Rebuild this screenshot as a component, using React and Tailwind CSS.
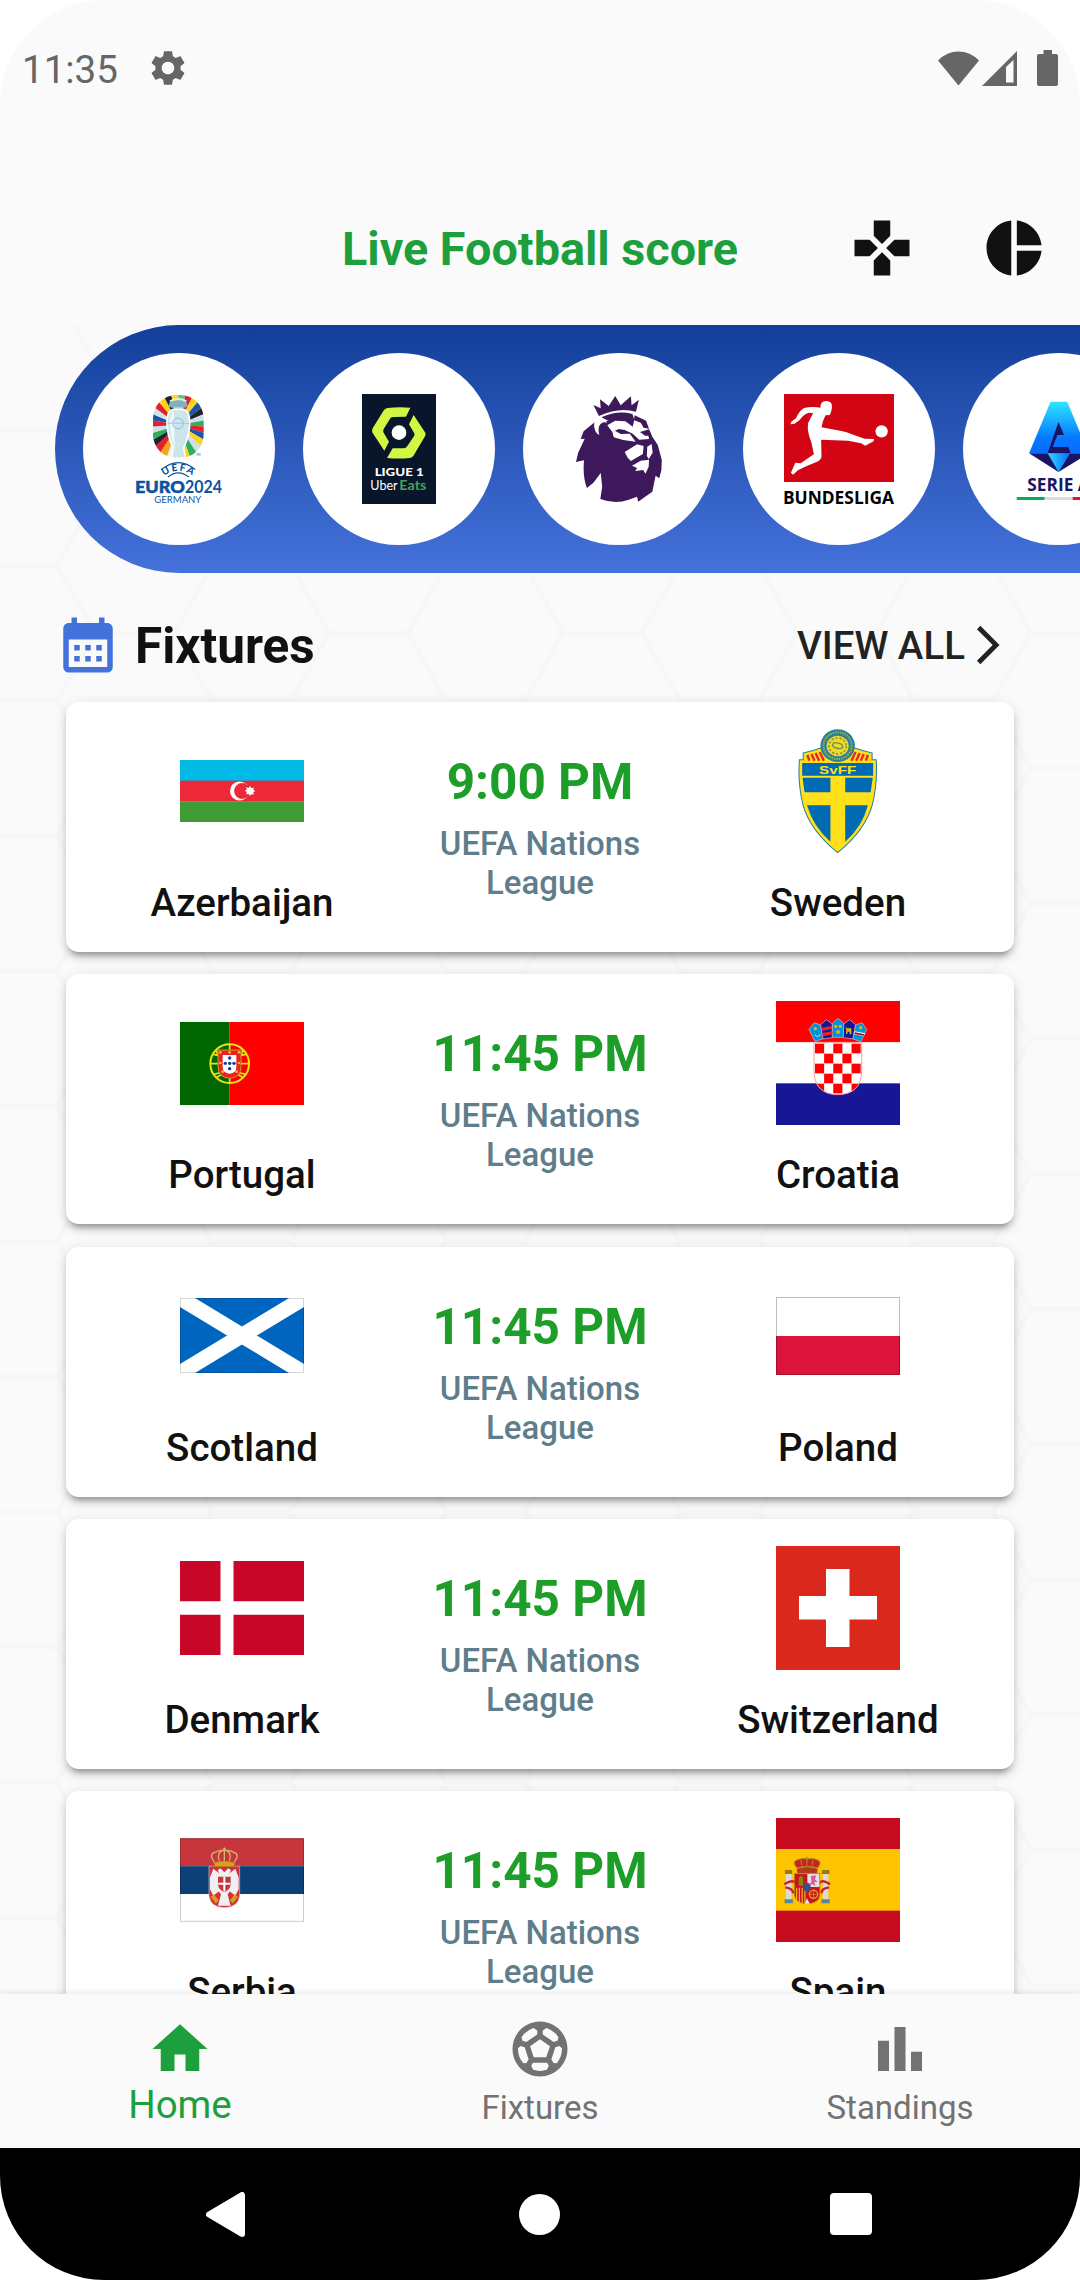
import React from "react";
import {
  MdSettings,
  MdGames,
  MdPieChart,
  MdCalendarMonth,
  MdArrowForwardIos,
  MdHome,
  MdOutlineSportsSoccer,
  MdBarChart,
} from "react-icons/md";

/* ---------- league logos (110 x 110) ---------- */

const RAY_COLORS = [
  "#66c07c", "#e3202b", "#ffd21c", "#1d55a8", "#22242d", "#cfe0e8", "#2fae5f",
  "#e3202b", "#1d55a8", "#ffd21c", "#cfe0e8", "#2fae5f", "#ffd21c", "#e8f2f4",
  "#e8f2f4", "#f4a51c", "#e3202b", "#22242d", "#2fae5f", "#cfe0e8", "#e3202b",
  "#1d55a8", "#cfe0e8", "#e3202b", "#ffd21c", "#22242d", "#ffd21c",
];

function EuroLogo() {
  const step = 360 / RAY_COLORS.length;
  return (
    <svg viewBox="0 0 110 110" className="size-[110px] overflow-visible">
      <defs>
        <clipPath id="oval">
          <rect x="339" y="255" width="152" height="189" rx="70" />
        </clipPath>
        <path id="uefaArc" d="M372 498 Q415 466 460 498" />
      </defs>
      <g transform="scale(.33333) translate(-252 -252)">
        <g clipPath="url(#oval)">
          {RAY_COLORS.map((c, i) => {
            const a = ((i * step - 90) * Math.PI) / 180;
            const b = (((i + 1) * step - 90) * Math.PI) / 180;
            const x1 = 415 + 170 * Math.cos(a);
            const y1 = 345 + 170 * Math.sin(a);
            const x2 = 415 + 170 * Math.cos(b);
            const y2 = 345 + 170 * Math.sin(b);
            return <path key={i} fill={c} d={`M415 345L${x1} ${y1}L${x2} ${y2}Z`} />;
          })}
        </g>
        <path d="M388 278 Q415 262 441 278 L443 290 Q415 300 386 290Z" fill="#7fb0bd" />
        <path d="M390 274 Q415 260 439 274" stroke="#d9eef0" strokeWidth="6" fill="none" />
        <path d="M402 290 H428 L430 312 H399Z" fill="#a5cfd8" />
        <path
          d="M394 444 L399 414 Q380 372 381 336 Q381 302 400 298 L430 298 Q449 302 449 336 Q450 372 431 414 L437 444Z"
          fill="#cbe5ea"
          stroke="#fff"
          strokeWidth="5"
        />
        <path d="M390 330 Q395 300 402 305 L404 420 Q388 370 390 330Z" fill="#eef8f9" />
        <circle cx="414" cy="340" r="16" fill="none" stroke="#8fc0cf" strokeWidth="3" />
        <path d="M383 340 H448" stroke="#8fc0cf" strokeWidth="2" />
        <path d="M364 479 Q415 437 466 479 M384 501 Q415 476 446 501" fill="none" stroke="#0d54a0" strokeWidth="3.5" />
        <text fontFamily="Lato" fontWeight="900" fontSize="30" fill="#0d54a0" letterSpacing="5">
          <textPath href="#uefaArc">UEFA</textPath>
        </text>
        <text x="285" y="549" textLength="150" lengthAdjust="spacingAndGlyphs" fontFamily="Lato" fontWeight="900" fontSize="51" fill="#0d54a0" stroke="#0d54a0" strokeWidth="1.5">EURO</text>
        <text x="435" y="549" textLength="111" lengthAdjust="spacingAndGlyphs" fontFamily="Lato" fontWeight="700" fontSize="51" fill="#0d54a0">2024</text>
        <text x="343" y="579" textLength="141" lengthAdjust="spacingAndGlyphs" fontFamily="Lato" fontSize="28" fill="#0d54a0">GERMANY</text>
        <text x="468" y="437" fontFamily="Lato" fontSize="9" fill="#0d54a0">TM</text>
      </g>
    </svg>
  );
}

function LigueLogo() {
  return (
    <svg viewBox="0 0 110 110" className="size-[110px]">
      <g transform="scale(.33333) translate(-912 -252)">
        <rect x="966" y="252" width="222" height="330" fill="#08152b" />
        <path fill="#d2f743" d="M1043 294Q1036 295 1032 300L998 355Q995 362 998 369L1033 422L1047 395L1031 368Q1028 363 1031 357L1051 325Q1055 321 1060 321L1098 320L1111 293Q1075 290 1043 294Z" />
        <path fill="#d2f743" d="M1121 315L1156 368Q1158 374 1155 379L1120 438Q1116 443 1110 444Q1075 447 1041 444L1058 415L1092 415Q1098 415 1102 408L1123 377Q1125 373 1122 368L1107 343Z" />
        <circle cx="1077" cy="368" r="22" fill="#fff" />
        <text x="1004" y="497" textLength="147" lengthAdjust="spacingAndGlyphs" fontFamily="Lato" fontWeight="900" fontSize="36" fill="#fff">LIGUE 1</text>
        <text x="991" y="541" textLength="82" lengthAdjust="spacingAndGlyphs" fontFamily="Lato" fontSize="38" fill="#fff">Uber</text>
        <text x="1078" y="541" textLength="81" lengthAdjust="spacingAndGlyphs" fontFamily="Lato" fontWeight="700" fontSize="38" fill="#45a356">Eats</text>
      </g>
    </svg>
  );
}

function PremierLogo() {
  return (
    <svg viewBox="0 0 110 110" className="size-[110px]">
      <g transform="scale(.3635 .33333) translate(-149 -252)" fill="#3d195b">
        <path d="M245 318L230 285L250 295L248 268L272 288L290 258L305 286L333 259L335 286L355 269L347 305Q300 290 245 318Z" />
        <path d="M252 322Q295 300 337 312L342 328L343 316L375 332L383 357L392 380L407 405L418 450L417 480L411 505L401 497L392 545L353 575L350 560L325 570Q290 584 249 567L254 530L250 489L230 518L212 534Q200 500 204 451L182 456L188 428L206 386L195 387L203 364L233 337Q230 365 245 374Q238 345 254 334L272 333Z" />
        <g fill="#fff">
          <path d="M268 346L290 332L318 334L338 350L342 331L360 338L368 353L385 357L358 366L372 377L381 377L383 387L356 389L338 371L316 360L300 357L289 362L305 372L330 371L346 395L312 390L286 382L282 366Z" />
          <path d="M316 426L350 403L368 408L366 432L333 453L324 443Z" />
          <path d="M378 410L390 402L393 428L382 447L377 438Z" />
          <path d="M336 467L360 452L383 449L382 470L373 491L367 480L345 483L350 474Z" />
          <path d="M232 340Q240 326 262 330L268 338Q252 332 245 350Q242 362 246 375Q232 368 232 340Z" />
        </g>
      </g>
    </svg>
  );
}

function BundesligaLogo() {
  return (
    <svg viewBox="0 0 110 110" className="size-[110px] overflow-visible">
      <g transform="scale(.3642 .33333) translate(-754 -252)">
        <rect x="754" y="252" width="302" height="264" fill="#d20515" />
        <g fill="#fff">
          <path d="M854 293Q853 274 870 273Q886 274 886 290Q885 303 880 315L868 316Q860 332 857 352L912 363Q928 366 944 374L975 386L1001 387L1000 394L977 407L966 400L930 392L856 389L857 440Q856 448 848 454L815 469L792 481L779 494L773 488L785 458L800 460L836 433L829 397Q817 365 820 340L834 310L822 308Q808 312 797 330L783 341L772 343L774 335L787 325Q795 303 809 294Q832 288 854 293Z" />
          <ellipse cx="1022" cy="364" rx="17" ry="18.5" />
        </g>
        <text x="751" y="581" textLength="305" lengthAdjust="spacingAndGlyphs" fontFamily="Open Sans" fontWeight="700" fontSize="51" fill="#000">BUNDESLIGA</text>
      </g>
    </svg>
  );
}

function SerieALogo() {
  return (
    <svg viewBox="0 0 110 110" className="size-[110px] overflow-visible">
      <defs>
        <linearGradient id="serieBlue" x1="0" y1="0" x2="0" y2="1">
          <stop offset="0" stopColor="#2fe6ff" />
          <stop offset=".7" stopColor="#0678ff" />
          <stop offset="1" stopColor="#066cff" />
        </linearGradient>
        <linearGradient id="serieGem" x1="0" y1="0" x2="1" y2="0">
          <stop offset="0" stopColor="#2fd8ff" />
          <stop offset="1" stopColor="#066cff" />
        </linearGradient>
      </defs>
      <g transform="scale(.3635 .33333) translate(-1359 -252)">
        <path d="M1487 275H1533L1592 430H1428Z" fill="url(#serieBlue)" />
        <path d="M1509 336L1524 375H1506L1493 411H1536L1542 430H1479Z" fill="#1b1464" />
        <path d="M1428 430H1592L1509 486Z" fill="#1b1464" />
        <path d="M1479 430H1541L1509 486Z" fill="url(#serieGem)" />
        <text x="1423" y="542" textLength="172" lengthAdjust="spacingAndGlyphs" fontFamily="Open Sans" fontWeight="700" fontSize="52" fill="#1b1464">SERIE A</text>
        <path d="M1394 561H1471V570H1394Z" fill="#00b14f" />
        <path d="M1471 561H1548V570H1471Z" fill="#dcdcdc" />
        <path d="M1548 561H1625V570H1548Z" fill="#ec1035" />
      </g>
    </svg>
  );
}

/* ---------- team flags (124 wide) ---------- */

function Azerbaijan() {
  return (
    <svg viewBox="0 0 124 62" className="w-[124px] h-[62px]">
      <rect width="124" height="21" fill="#00b9e4" />
      <rect y="20.7" width="124" height="21" fill="#ed2939" />
      <rect y="41.5" width="124" height="20.5" fill="#3f9c35" />
      <circle cx="59.5" cy="31" r="9.5" fill="#fff" />
      <circle cx="62" cy="31" r="7.9" fill="#ed2939" />
      <path fill="#fff" d="M70 26l1.4 2.3 2.5-.8-.7 2.3 2 1.2-2 1.3.7 2.5-2.5-.7L70 36l-1.4-2.2-2.5.7.7-2.5-2-1.3 2-1.2-.7-2.3 2.5.8z" />
    </svg>
  );
}

function Sweden() {
  return (
    <svg viewBox="0 0 124 124" className="size-[124px]">
      <g transform="scale(.3444 .33333) translate(-685 -417)">
        <path d="M753 509H764V489Q790 484 815 474H914Q940 484 964 489V509H976Q980 580 965 643Q945 720 864 788Q783 720 763 643Q748 580 753 509Z" fill="#ffe01b" stroke="#2b7f9c" strokeWidth="3" />
        <path d="M776 495L782 512M788 492L797 512M800 489L810 512M812 486L824 512M952 495L946 512M940 492L931 512M928 489L918 512M916 486L904 512" stroke="#e8262c" strokeWidth="7" />
        <path fill="#006ab3" d="M761 519H967V557H761ZM762 563H843V607H768ZM886 563H966L960 607H886ZM775 646H843V755Q793 710 775 646ZM886 646H952Q935 712 886 755Z" />
        <text x="864" y="552" textAnchor="middle" textLength="108" lengthAdjust="spacingAndGlyphs" fontFamily="Liberation Sans" fontWeight="700" fontSize="34" fill="#ffe01b">SvFF</text>
        <ellipse cx="864" cy="467" rx="50" ry="49" fill="#2b7f9c" />
        <ellipse cx="864" cy="467" rx="41" ry="40" fill="none" stroke="#9fb83c" strokeWidth="6" strokeDasharray="4 3" />
        <ellipse cx="864" cy="468" rx="32" ry="31" fill="#f0d92a" />
        <ellipse cx="864" cy="468" rx="25" ry="24" fill="none" stroke="#8c9a3a" strokeWidth="5" strokeDasharray="7 5" />
        <ellipse cx="864" cy="467" rx="15" ry="8" transform="rotate(15 864 467)" fill="none" stroke="#6f8f45" strokeWidth="4" />
      </g>
    </svg>
  );
}

function Portugal() {
  return (
    <svg viewBox="60 65 372 249" className="w-[124px] h-[83px]">
      <rect x="60" y="65" width="148" height="249" fill="#060" />
      <rect x="208" y="65" width="224" height="249" fill="#f00" />
      <g fill="none" stroke="#e6e31a" strokeWidth="6">
        <circle cx="209" cy="190" r="58" />
        <path d="M152 190H266M209 131V249M160 162Q209 176 258 162M162 222Q209 206 256 222M168 150Q185 195 250 232M250 150Q225 205 168 232" strokeWidth="5" />
      </g>
      <path d="M174 149H243V198Q243 232 209 234Q174 232 174 198Z" fill="#f0201c" stroke="#b9a13a" strokeWidth="3" />
      <path d="M188 164H229V200Q229 218 209 220Q188 218 188 200Z" fill="#fff" />
      <g fill="#0c3c9c">
        <circle cx="209" cy="173" r="5" /><circle cx="209" cy="189" r="5" /><circle cx="209" cy="205" r="5" />
        <circle cx="196" cy="189" r="5" /><circle cx="222" cy="189" r="5" />
      </g>
      <g fill="#d8c72a">
        <circle cx="181" cy="156" r="4" /><circle cx="209" cy="156" r="4" /><circle cx="237" cy="156" r="4" />
        <circle cx="181" cy="188" r="4" /><circle cx="237" cy="188" r="4" /><circle cx="188" cy="214" r="4" /><circle cx="230" cy="214" r="4" />
      </g>
    </svg>
  );
}

function Croatia() {
  const cells = [];
  for (let r = 0; r < 5; r++)
    for (let c = 0; c < 5; c++)
      if ((r + c) % 2 === 0) cells.push(<rect key={`${r}-${c}`} x={165 + c * 27.4} y={194 + r * 30} width="27.4" height="29" fill="#f00" />);
  return (
    <svg viewBox="48 66 372 372" className="size-[124px]">
      <defs>
        <clipPath id="croShield">
          <path d="M162 190H305V274Q305 346 233.500 347Q162 346 162 274Z" />
        </clipPath>
      </defs>
      <rect x="48" y="66" width="372" height="124" fill="#f00" />
      <rect x="48" y="190" width="372" height="124" fill="#fff" />
      <rect x="48" y="313" width="372" height="125" fill="#171796" />
      <g clipPath="url(#croShield)">
        <rect x="160" y="188" width="148" height="162" fill="#fff" />
        {cells}
      </g>
      <path d="M162 190H305V274Q305 346 233.500 347Q162 346 162 274Z" fill="none" stroke="#ff9a9a" strokeWidth="3" />
      <g stroke="#f2b0b8" strokeWidth="2">
        <path d="M147 151L163 131L182 138L189 179L165 188Z" fill="#0093dd" />
        <path d="M182 137L199 122L217 135V176L189 180Z" fill="#171796" />
        <path d="M217 133L234 118L251 133L250 175H217Z" fill="#0093dd" />
        <path d="M251 135L269 122L287 137L279 180L250 176Z" fill="#171796" />
        <path d="M287 138L306 131L320 151L303 188L279 180Z" fill="#0093dd" />
      </g>
      <path d="M185 146L216 141V150L186 155ZM187 162L217 157V166L188 172Z" fill="#f0202c" />
      <path d="M284 157L316 163L312 172L281 166Z" fill="#fff" />
      <path d="M285 160L314 166L312 170L283 165Z" fill="#8a1020" />
      <path d="M164 167Q172 178 182 166" fill="none" stroke="#b9e2ff" strokeWidth="3" />
      <g fill="#d9b81c">
        <circle cx="166" cy="149" r="5" /><circle cx="227" cy="142" r="5" /><circle cx="241" cy="142" r="5" /><circle cx="234" cy="159" r="6" />
        <circle cx="302" cy="146" r="5" /><path d="M256 142L261 148H274V166H270L268 158H263L262 165H258L259 152Z" />
      </g>
    </svg>
  );
}

function Scotland() {
  return (
    <svg viewBox="0 0 124 75" className="w-[124px] h-[75px]">
      <rect width="124" height="75" fill="#0065bf" />
      <path d="M0 0L124 75M124 0L0 75" stroke="#fff" strokeWidth="15.500" />
      <rect x=".5" y=".5" width="123" height="74" fill="none" stroke="#000" strokeOpacity=".16" />
    </svg>
  );
}

function Poland() {
  return (
    <svg viewBox="0 0 124 78" className="w-[124px] h-[78px]">
      <rect width="124" height="78" fill="#fff" />
      <rect y="39" width="124" height="39" fill="#dc143c" />
      <rect x=".5" y=".5" width="123" height="77" fill="none" stroke="#000" strokeOpacity=".25" />
    </svg>
  );
}

function Denmark() {
  return (
    <svg viewBox="0 0 124 94" className="w-[124px] h-[94px]">
      <rect width="124" height="94" fill="#c80728" />
      <path d="M40.500 0H53.500V94H40.500ZM0 40.300H124V53.700H0Z" fill="#fff" />
    </svg>
  );
}

function Switzerland() {
  return (
    <svg viewBox="0 0 124 124" className="size-[124px]">
      <rect width="124" height="124" fill="#da291c" />
      <path d="M50 23H73.500V50H101V73.500H73.500V101H50V73.500H23V50H50Z" fill="#fff" />
    </svg>
  );
}

function Serbia() {
  return (
    <svg viewBox="420 172 372 251" className="w-[124px] h-[84px]">
      <rect x="420" y="172" width="372" height="84" fill="#c6363c" />
      <rect x="420" y="256" width="372" height="84" fill="#0c4076" />
      <rect x="420" y="340" width="372" height="83" fill="#fff" />
      <rect x="421.500" y="173.500" width="369" height="248" fill="none" stroke="#000" strokeOpacity=".2" strokeWidth="3" />
      <path d="M507 256H599V345Q594 380 553 380Q512 380 507 345Z" fill="#d2303a" stroke="#e8b9bc" strokeWidth="2" />
      <path d="M553 274L541 262L533 268L538 278L520 264L510 290L510 325L520 345L536 332L543 340L534 375H572L563 340L570 332L586 345L596 325L596 290L586 264L568 278L573 268L565 262Z" fill="#eef0f2" />
      <path d="M534 288H572V312Q570 328 553 334Q536 328 534 312Z" fill="#c6363c" />
      <path d="M553 288V332M535 309H571" stroke="#fff" strokeWidth="6" />
      <path d="M512 348L522 340L536 358L528 368ZM594 348L584 340L570 358L578 368Z" fill="#d99c1e" />
      <path d="M520 246Q553 234 586 246L581 258H525Z" fill="#dc9f22" stroke="#9b5c1c" strokeWidth="2" />
      <path d="M524 244Q504 220 526 214Q540 206 553 210Q566 206 580 214Q602 220 582 244M538 240Q530 218 545 210M568 240Q576 218 561 210M553 240V200M548 204H558" fill="none" stroke="#d9b46a" strokeWidth="4" />
    </svg>
  );
}

function Spain() {
  return (
    <svg viewBox="0 0 124 124" className="size-[124px]">
      <g transform="scale(.3444 .33333) translate(-685 -114)">
        <rect x="685" y="114" width="360" height="372" fill="#c60b1e" />
        <rect x="685" y="207" width="360" height="185" fill="#ffc400" />
        <path d="M714 280H730V366H714ZM821 280H837V366H821Z" fill="#d9dadd" />
        <path d="M711 270H732V282H711ZM818 270H840V282H818Z" fill="#9c7a12" />
        <path d="M710 358H734V370H710ZM817 358H841V370H817Z" fill="#5b8696" />
        <path d="M709 313Q735 296 742 310M712 322Q736 326 734 340M842 313Q818 296 811 310M839 322Q815 326 818 340" stroke="#c9202c" strokeWidth="7" fill="none" />
        <path d="M739 281H812V345Q810 370 775 371Q741 370 739 345Z" fill="#c9141f" stroke="#a9781b" strokeWidth="2" />
        <path d="M776 282H811V321H776Z" fill="#e6dfe6" />
        <path d="M786 288L802 286L798 298L806 306L796 306L800 318L790 312L782 316L788 304Z" fill="#d65a9c" />
        <path d="M751 292L757 287L764 292V317H751Z" fill="#8e8016" />
        <path d="M745 323V360M753 323V367M761 323V369M769 330V369" stroke="#f0b41c" strokeWidth="3.5" />
        <circle cx="794" cy="343" r="12" fill="none" stroke="#e39a1c" strokeWidth="4" />
        <path d="M794 328V358M780 343H808" stroke="#e39a1c" strokeWidth="2" />
        <ellipse cx="775" cy="322" rx="10" ry="13" fill="#1c5b9c" stroke="#c9202c" strokeWidth="2" />
        <path d="M768 371L775 355L783 371Z" fill="#e8e3e6" />
        <path d="M745 266Q775 256 806 266L804 279H747Z" fill="#b23a18" />
        <path d="M746 264Q730 246 746 240Q762 232 775 238Q790 232 806 240Q820 246 806 264Q775 254 746 264Z" fill="#c9202c" stroke="#a98a1c" strokeWidth="3" />
        <path d="M775 256V230M769 235H781M760 256L757 238M790 256L793 238" stroke="#a98a1c" strokeWidth="3" fill="none" />
      </g>
    </svg>
  );
}

/* ---------- data ---------- */

const LEAGUES = [EuroLogo, LigueLogo, PremierLogo, BundesligaLogo, SerieALogo];

const FIXTURES = [
  { home: "Azerbaijan", HomeFlag: Azerbaijan, away: "Sweden", AwayFlag: Sweden, time: "9:00 PM" },
  { home: "Portugal", HomeFlag: Portugal, away: "Croatia", AwayFlag: Croatia, time: "11:45 PM" },
  { home: "Scotland", HomeFlag: Scotland, away: "Poland", AwayFlag: Poland, time: "11:45 PM" },
  { home: "Denmark", HomeFlag: Denmark, away: "Switzerland", AwayFlag: Switzerland, time: "11:45 PM" },
  { home: "Serbia", HomeFlag: Serbia, away: "Spain", AwayFlag: Spain, time: "11:45 PM" },
];

/* ---------- page parts ---------- */

function StatusBar() {
  return (
    <div className="flex h-[171px] items-start justify-between pl-[22px] pr-[22px] pt-[46px] text-[#666]">
      <div className="flex h-[44px] items-center gap-[29px]">
        <span className="pt-[2px] text-[38.5px] leading-[45px]">11:35</span>
        <MdSettings className="size-[42px]" />
      </div>
      <div className="flex h-[44px] items-center">
        <svg viewBox="0 0 41 35" className="h-[35px] w-[41px]" fill="currentColor">
          <path d="M20.500 34.500L0 9.500Q9 .5 20.500 .5T41 9.500Z" />
        </svg>
        <svg viewBox="0 0 35 35" className="ml-[3px] h-[35px] w-[35px]" fill="currentColor">
          <path fillRule="evenodd" d="M0 35L35 0V35ZM24 16V31.500H31.500V9Z" />
        </svg>
        <svg viewBox="0 0 21 36" className="ml-[20px] h-[36px] w-[21px]" fill="currentColor">
          <path d="M6.500 0H15V4H19Q21 4 21 6V34Q21 36 19 36H2Q0 36 0 34V6Q0 4 2 4H6.500Z" />
        </svg>
      </div>
    </div>
  );
}

function AppBar() {
  return (
    <header className="grid h-[154px] grid-cols-[1fr_auto_1fr] items-center">
      <span />
      <h1 className="pt-[2px] text-[46.75px] font-bold leading-[56px] text-[#1e9f3e]">Live Football score</h1>
      <div className="flex justify-end gap-[66px] pr-[33px] text-[#111]">
        <MdGames className="size-[66px]" />
        <MdPieChart className="size-[66px]" />
      </div>
    </header>
  );
}

function HexBackdrop() {
  return (
    <svg className="absolute inset-0 h-full w-full">
      <defs>
        <pattern id="hex" width="234" height="135.200" patternUnits="userSpaceOnUse" patternTransform="translate(95 308)">
          <path
            d="M0 0H79L117 67.600H196L234 0M0 135.200H79L117 67.600M196 67.600L234 135.200"
            fill="none"
            stroke="#f5f8f8"
            strokeWidth="5"
          />
        </pattern>
      </defs>
      <rect width="100%" height="100%" fill="url(#hex)" />
    </svg>
  );
}

function LeagueStrip() {
  return (
    <div className="ml-[55px] flex h-[247.5px] items-center gap-[27.5px] overflow-hidden rounded-l-full bg-linear-to-b from-[#133f9a] to-[#4472db] pl-[27.5px]">
      {LEAGUES.map((Logo, i) => (
        <div key={i} className="flex size-[192.5px] shrink-0 items-center justify-center rounded-full bg-white">
          <Logo />
        </div>
      ))}
    </div>
  );
}

function Team({ name, Flag }) {
  return (
    <div className="flex flex-col items-center pt-[27px]">
      <div className="flex size-[124px] items-center justify-center">
        <Flag />
      </div>
      <span className="mt-[27px] text-[38.5px] font-medium leading-[45px] text-[#111]">{name}</span>
    </div>
  );
}

function FixtureCard({ f }) {
  return (
    <article className="grid h-[250px] shrink-0 grid-cols-[352px_244px_352px] rounded-[13px] bg-white shadow-[0_8px_4px_-5px_rgba(0,0,0,0.2),0_6px_6px_rgba(0,0,0,0.14),0_3px_14px_rgba(0,0,0,0.12)]">
      <Team name={f.home} Flag={f.HomeFlag} />
      <div className="flex flex-col items-center pt-[51px] text-center">
        <span className="text-[49.5px] font-bold leading-[58px] whitespace-nowrap text-[#1c9e29]">{f.time}</span>
        <span className="mt-[13px] text-[33px] font-medium leading-[39px] text-[#607d8b]">UEFA Nations League</span>
      </div>
      <Team name={f.away} Flag={f.AwayFlag} />
    </article>
  );
}

function BottomNav() {
  return (
    <nav className="relative grid h-[154px] grid-cols-3 bg-[#fafafa] pt-[22px] text-[#727272] shadow-[0_-2px_6px_rgba(0,0,0,0.08)]">
      <div className="flex flex-col items-center text-[#1e9f3e]">
        <MdHome className="size-[66px]" />
        <span className="text-[38.5px] leading-[45px]">Home</span>
      </div>
      <div className="flex flex-col items-center">
        <MdOutlineSportsSoccer className="size-[66px]" />
        <span className="mt-[6px] text-[33px] leading-[39px]">Fixtures</span>
      </div>
      <div className="flex flex-col items-center">
        <MdBarChart className="size-[66px]" />
        <span className="mt-[6px] text-[33px] leading-[39px]">Standings</span>
      </div>
    </nav>
  );
}

function SystemNav() {
  return (
    <div className="flex h-[132px] items-center justify-between bg-black pl-[206px] pr-[208px]">
      <svg viewBox="0 0 39 45" className="h-[45px] w-[39px]">
        <path d="M3 22.500L36 3V42Z" fill="#fff" stroke="#fff" strokeWidth="6" strokeLinejoin="round" />
      </svg>
      <span className="ml-[4px] size-[41px] rounded-full bg-white" />
      <span className="size-[42px] rounded-[4px] bg-white" />
    </div>
  );
}

export default function App() {
  return (
    <div className="h-[2280px] w-[1080px] overflow-hidden bg-white">
      <div className="flex h-full flex-col overflow-hidden rounded-[104px] bg-[#fafafa] font-['Roboto',sans-serif]">
        <StatusBar />
        <AppBar />
        <main className="relative h-[1669px] shrink-0 overflow-hidden">
          <HexBackdrop />
          <div className="relative flex flex-col">
            <LeagueStrip />
            <div className="flex h-[129.5px] items-center justify-between pl-[55px] pr-[69px] pt-[16px]">
              <div className="flex items-center gap-[14px]">
                <MdCalendarMonth className="size-[66px] text-[#4472db]" />
                <h2 className="pt-[2px] text-[49.5px] font-bold leading-[58px] text-[#111]">Fixtures</h2>
              </div>
              <div className="flex items-center text-[#222]">
                <span className="text-[38.5px] font-medium leading-[45px]">VIEW ALL</span>
                <MdArrowForwardIos className="size-[46px]" />
              </div>
            </div>
            <div className="flex flex-col gap-[22.3px] px-[66px]">
              {FIXTURES.map((f) => (
                <FixtureCard key={f.home} f={f} />
              ))}
            </div>
          </div>
        </main>
        <BottomNav />
        <SystemNav />
      </div>
    </div>
  );
}
